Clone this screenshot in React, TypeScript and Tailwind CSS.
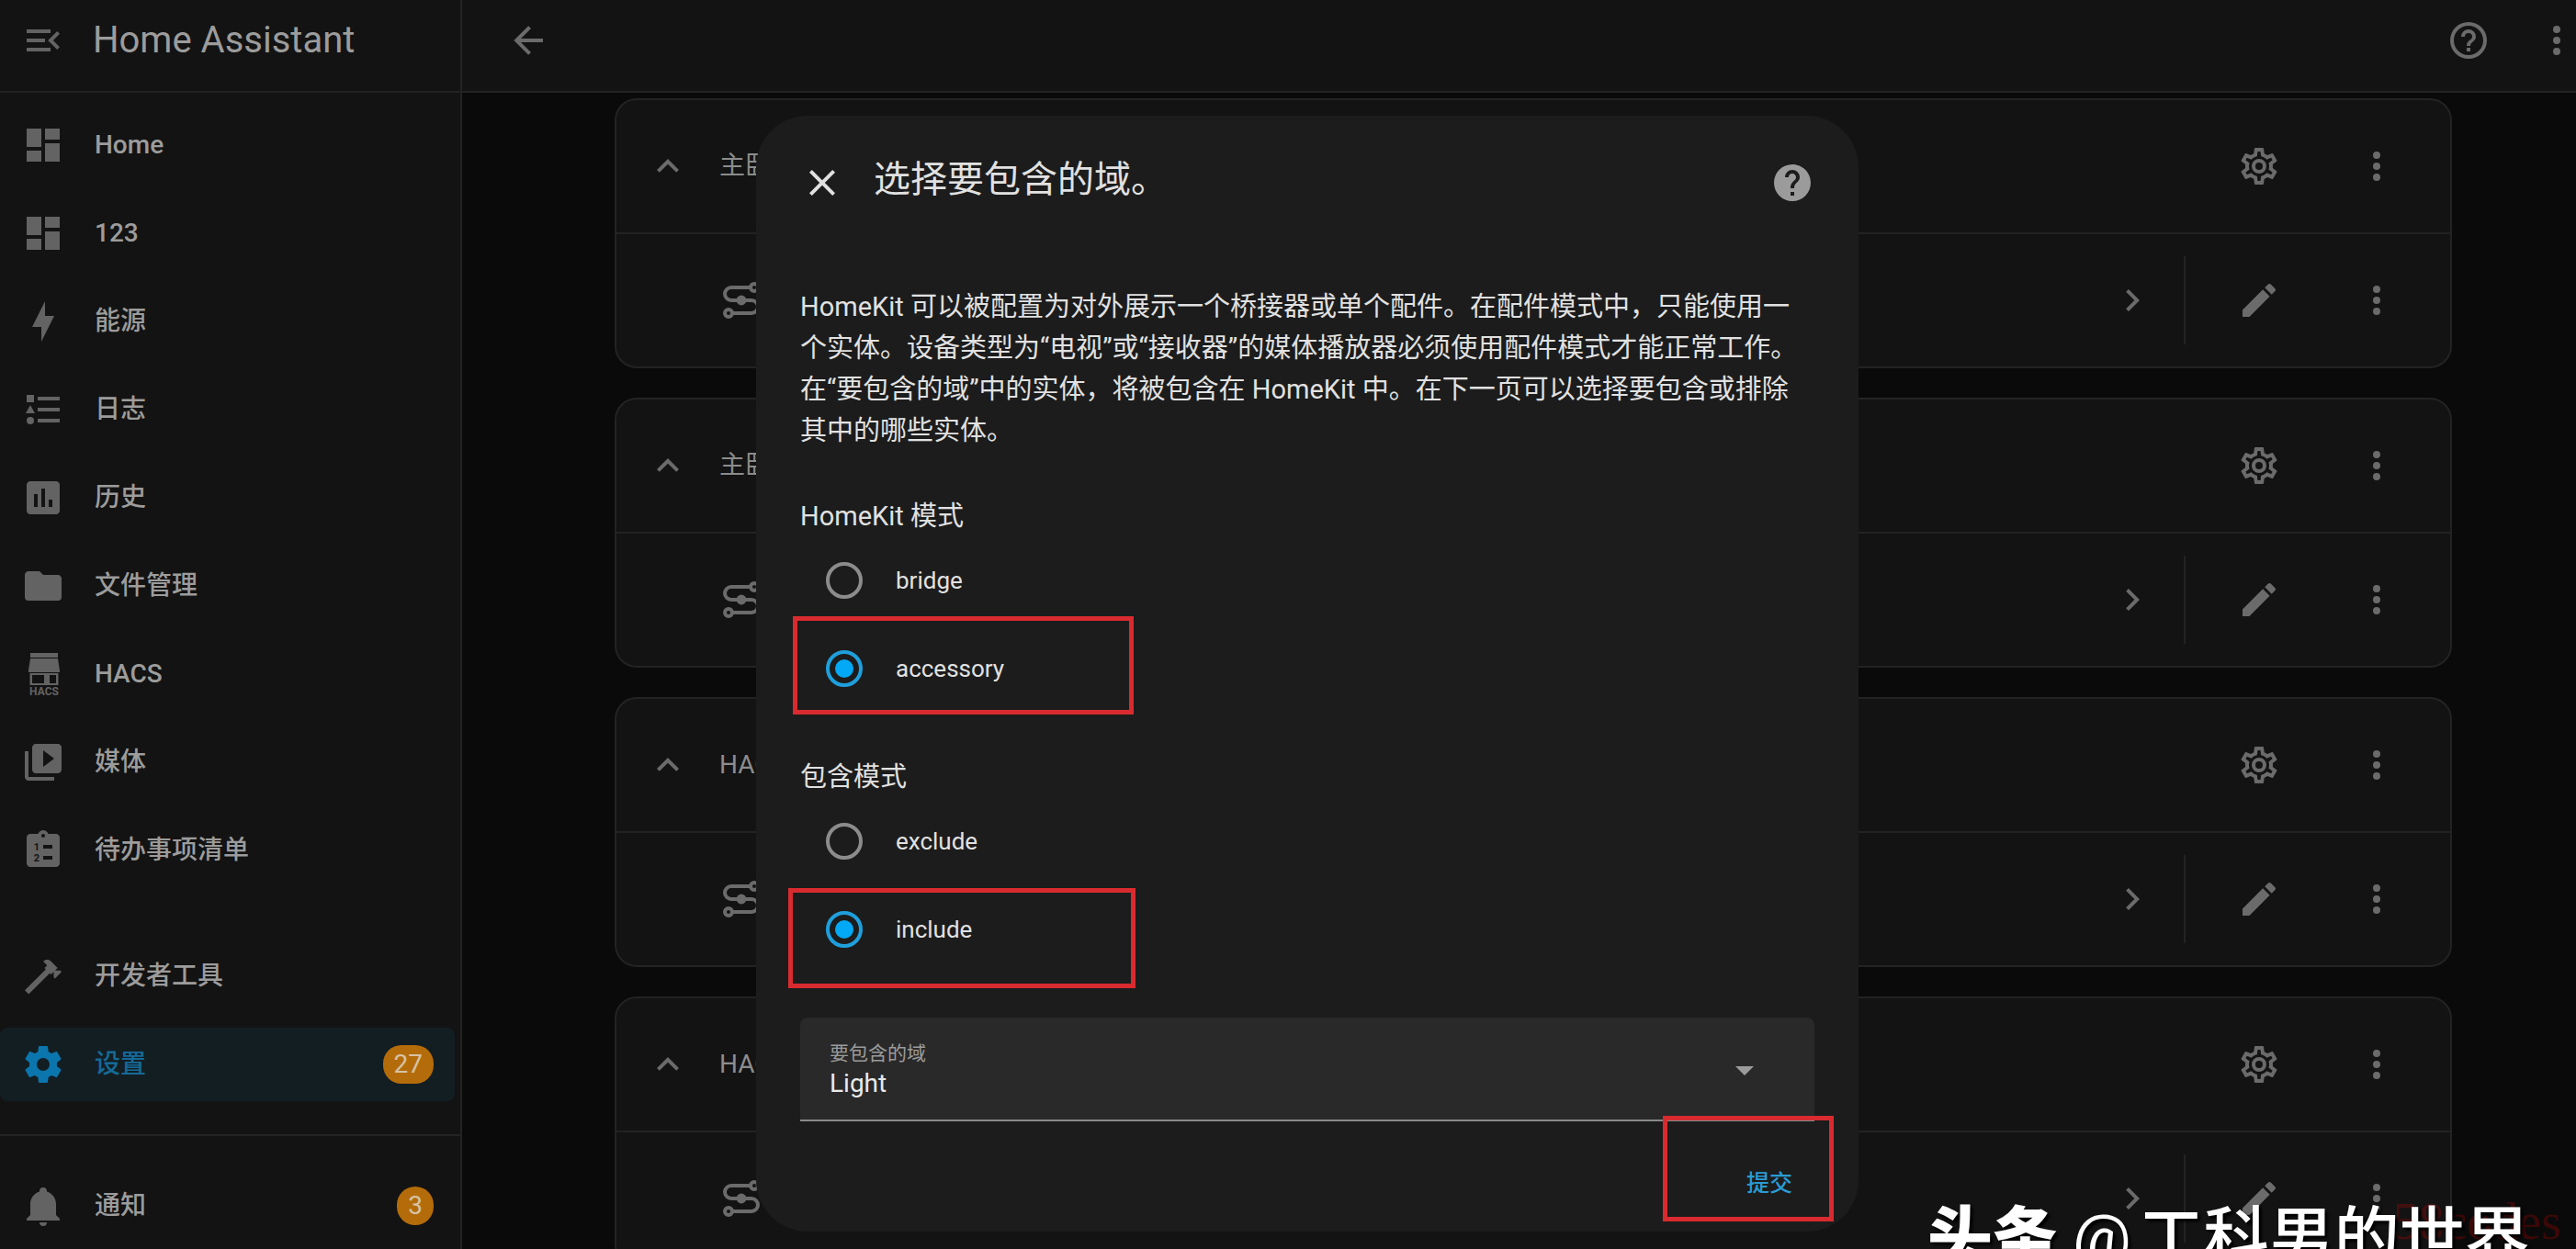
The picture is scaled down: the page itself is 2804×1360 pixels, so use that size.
import { useState } from "react"
import type { ReactNode } from "react"

const ICONS = {
  menuOpen:
    "M3 18h13v-2H3v2zm0-5h10v-2H3v2zm0-7v2h13V6H3zm18 9.59L17.42 12 21 8.41 19.59 7l-5 5 5 5L21 15.59z",
  arrowLeft: "M20,11V13H8L13.5,18.5L12.08,19.92L4.16,12L12.08,4.08L13.5,5.5L8,11H20Z",
  dashboard: "M3 13h8V3H3v10zm0 8h8v-6H3v6zm10 0h8V11h-8v10zm0-18v6h8V3h-8z",
  bolt: "M11 15H6L13 1V9H18L11 23V15Z",
  listType:
    "M5,9.5L7.5,14H2.5L5,9.5M3,4H7V8H3V4M5,20A2,2 0 0,0 7,18A2,2 0 0,0 5,16A2,2 0 0,0 3,18A2,2 0 0,0 5,20M9,5V7H21V5H9M9,19H21V17H9V19M9,13H21V11H9V13Z",
  chartBox:
    "M9 17H7V10H9V17M13 17H11V7H13V17M17 17H15V13H17V17M19 3H5C3.9 3 3 3.9 3 5V19C3 20.1 3.9 21 5 21H19C20.1 21 21 20.1 21 19V5C21 3.9 20.1 3 19 3Z",
  folder:
    "M10,4H4C2.89,4 2,4.89 2,6V18A2,2 0 0,0 4,20H20A2,2 0 0,0 22,18V8C22,6.89 21.1,6 20,6H12L10,4Z",
  media:
    "M4 6H2v14c0 1.1.9 2 2 2h14v-2H4V6zm16-4H8c-1.1 0-2 .9-2 2v12c0 1.1.9 2 2 2h12c1.1 0 2-.9 2-2V4c0-1.1-.9-2-2-2zm-8 12.5v-9l6 4.5-6 4.5z",
  hammer:
    "M2,19.63L13.43,8.2L12.72,7.5L14.14,6.07L12,3.89C13.2,2.7 15.09,2.7 16.27,3.89L19.87,7.5L18.45,8.91H21.29L22,9.62L18.45,13.21L17.74,12.5V9.62L16.27,11.04L15.56,10.33L4.13,21.76L2,19.63Z",
  cog: "M12,15.5A3.5,3.5 0 0,1 8.5,12A3.5,3.5 0 0,1 12,8.5A3.5,3.5 0 0,1 15.5,12A3.5,3.5 0 0,1 12,15.5M19.43,12.97C19.47,12.65 19.5,12.33 19.5,12C19.5,11.67 19.47,11.34 19.43,11L21.54,9.37C21.73,9.22 21.78,8.95 21.66,8.73L19.66,5.27C19.54,5.05 19.27,4.96 19.05,5.05L16.56,6.05C16.04,5.66 15.5,5.32 14.87,5.07L14.5,2.42C14.46,2.18 14.25,2 14,2H10C9.75,2 9.54,2.18 9.5,2.42L9.13,5.07C8.5,5.32 7.96,5.66 7.44,6.05L4.95,5.05C4.73,4.96 4.46,5.05 4.34,5.27L2.34,8.73C2.21,8.95 2.27,9.22 2.46,9.37L4.57,11C4.53,11.34 4.5,11.67 4.5,12C4.5,12.33 4.53,12.65 4.57,12.97L2.46,14.63C2.27,14.78 2.21,15.05 2.34,15.27L4.34,18.73C4.46,18.95 4.73,19.03 4.95,18.95L7.44,17.94C7.96,18.34 8.5,18.68 9.13,18.93L9.5,21.58C9.54,21.82 9.75,22 10,22H14C14.25,22 14.46,21.82 14.5,21.58L14.87,18.93C15.5,18.67 16.04,18.34 16.56,17.94L19.05,18.95C19.27,19.03 19.54,18.95 19.66,18.73L21.66,15.27C21.78,15.05 21.73,14.78 21.54,14.63L19.43,12.97Z",
  cogOutline:
    "M12,8A4,4 0 0,1 16,12A4,4 0 0,1 12,16A4,4 0 0,1 8,12A4,4 0 0,1 12,8M12,10A2,2 0 0,0 10,12A2,2 0 0,0 12,14A2,2 0 0,0 14,12A2,2 0 0,0 12,10M10,22C9.75,22 9.54,21.82 9.5,21.58L9.13,18.93C8.5,18.68 7.96,18.34 7.44,17.94L4.95,18.95C4.73,19.03 4.46,18.95 4.34,18.73L2.34,15.27C2.21,15.05 2.27,14.78 2.46,14.63L4.57,12.97L4.5,12L4.57,11L2.46,9.37C2.27,9.22 2.21,8.95 2.34,8.73L4.34,5.27C4.46,5.05 4.73,4.96 4.95,5.05L7.44,6.05C7.96,5.66 8.5,5.32 9.13,5.07L9.5,2.42C9.54,2.18 9.75,2 10,2H14C14.25,2 14.46,2.18 14.5,2.42L14.87,5.07C15.5,5.32 16.04,5.66 16.56,6.05L19.05,5.05C19.27,4.96 19.54,5.05 19.66,5.27L21.66,8.73C21.79,8.95 21.73,9.22 21.54,9.37L19.43,11L19.5,12L19.43,13L21.54,14.63C21.73,14.78 21.79,15.05 21.66,15.27L19.66,18.73C19.54,18.95 19.27,19.04 19.05,18.95L16.56,17.95C16.04,18.34 15.5,18.68 14.87,18.93L14.5,21.58C14.46,21.82 14.25,22 14,22H10M11.25,4L10.88,6.61C9.68,6.86 8.62,7.5 7.85,8.39L5.44,7.35L4.69,8.65L6.8,10.2C6.4,11.37 6.4,12.64 6.8,13.8L4.68,15.36L5.43,16.66L7.86,15.62C8.63,16.5 9.68,17.14 10.87,17.38L11.24,20H12.76L13.13,17.39C14.32,17.14 15.37,16.5 16.14,15.62L18.57,16.66L19.32,15.36L17.2,13.81C17.6,12.64 17.6,11.37 17.2,10.2L19.31,8.65L18.56,7.35L16.15,8.39C15.38,7.5 14.32,6.86 13.12,6.62L12.75,4H11.25Z",
  bell: "M21,19V20H3V19L5,17V11C5,7.9 7.03,5.17 10,4.29C10,4.19 10,4.1 10,4A2,2 0 0,1 12,2A2,2 0 0,1 14,4C14,4.1 14,4.19 14,4.29C16.97,5.17 19,7.9 19,11V17L21,19M14,21A2,2 0 0,1 12,23A2,2 0 0,1 10,21",
  helpOutline:
    "M11,18H13V16H11V18M12,2A10,10 0 0,0 2,12A10,10 0 0,0 12,22A10,10 0 0,0 22,12A10,10 0 0,0 12,2M12,20C7.59,20 4,16.41 4,12C4,7.59 7.59,4 12,4C16.41,4 20,7.59 20,12C20,16.41 16.41,20 12,20M12,6A4,4 0 0,0 8,10H10A2,2 0 0,1 12,8A2,2 0 0,1 14,10C14,12 11,11.75 11,15H13C13,12.75 16,12.5 16,10A4,4 0 0,0 12,6Z",
  help: "M15.07,11.25L14.17,12.17C13.45,12.89 13,13.5 13,15H11V14.5C11,13.39 11.45,12.39 12.17,11.67L13.41,10.41C13.78,10.05 14,9.55 14,9C14,7.89 13.1,7 12,7A2,2 0 0,0 10,9H8A4,4 0 0,1 12,5A4,4 0 0,1 16,9C16,9.88 15.64,10.67 15.07,11.25M13,19H11V17H13M12,2A10,10 0 0,0 2,12A10,10 0 0,0 12,22A10,10 0 0,0 22,12C22,6.47 17.5,2 12,2Z",
  dots: "M12,16A2,2 0 0,1 14,18A2,2 0 0,1 12,20A2,2 0 0,1 10,18A2,2 0 0,1 12,16M12,10A2,2 0 0,1 14,12A2,2 0 0,1 12,14A2,2 0 0,1 10,12A2,2 0 0,1 12,10M12,4A2,2 0 0,1 14,6A2,2 0 0,1 12,8A2,2 0 0,1 10,6A2,2 0 0,1 12,4Z",
  pencil:
    "M20.71,7.04C21.1,6.65 21.1,6 20.71,5.63L18.37,3.29C18,2.9 17.35,2.9 16.96,3.29L15.12,5.12L18.87,8.87M3,17.25V21H6.75L17.81,9.93L14.06,6.18L3,17.25Z",
  chevronUp: "M7.41,15.41L12,10.83L16.59,15.41L18,14L12,8L6,14L7.41,15.41Z",
  chevronRight: "M8.59,16.58L13.17,12L8.59,7.41L10,6L16,12L10,18L8.59,16.58Z",
  close:
    "M19,6.41L17.59,5L12,10.59L6.41,5L5,6.41L10.59,12L5,17.59L6.41,19L12,13.41L17.59,19L19,17.59L13.41,12L19,6.41Z",
  menuDown: "M7,10L12,15L17,10H7Z",
}

type IconName = keyof typeof ICONS

function Icon({ name }: { name: IconName }) {
  return (
    <svg viewBox="0 0 24 24" className="size-12 shrink-0" fill="currentColor" aria-hidden="true">
      <path fillRule="evenodd" d={ICONS[name]} />
    </svg>
  )
}

function HacsIcon() {
  return (
    <svg viewBox="0 0 48 48" className="size-12 shrink-0 overflow-visible" fill="currentColor" aria-hidden="true">
      <path d="M10 1h30v5H10zM10 7h30l2 13v2H8v-2z" />
      <path fillRule="evenodd" d="M9.500 23h31v13h-31zM12 25v9h13v-9zM31 25v9h7v-9z" />
      <text x="25" y="47" fontSize="12" fontWeight="700" textAnchor="middle">
        HACS
      </text>
    </svg>
  )
}

function TodoIcon() {
  return (
    <svg viewBox="0 0 24 24" className="size-12 shrink-0" fill="currentColor" aria-hidden="true">
      <path
        fillRule="evenodd"
        d="M19 3h-4.180C14.400 1.840 13.300 1 12 1c-1.300 0-2.400.840-2.820 2H5c-1.100 0-2 .9-2 2v14c0 1.100.9 2 2 2h14c1.100 0 2-.9 2-2V5c0-1.100-.9-2-2-2zm-7 0c.550 0 1 .450 1 1s-.450 1-1 1-1-.450-1-1 .450-1 1-1zM12 9h5v2h-5zM12 15h5v2h-5z"
      />
      <text x="8.500" y="12" fontSize="5.500" fontWeight="700" textAnchor="middle" className="fill-[#131313]">
        1
      </text>
      <text x="8.500" y="18" fontSize="5.500" fontWeight="700" textAnchor="middle" className="fill-[#131313]">
        2
      </text>
    </svg>
  )
}

function TransitIcon() {
  return (
    <svg viewBox="0 0 24 24" className="size-12 shrink-0" fill="none" stroke="currentColor" strokeWidth="2" aria-hidden="true">
      <path d="M16.500 5H6.500a3.500 3.500 0 0 0 0 7h11a3.500 3.500 0 0 1 0 7H7.500" />
      <circle cx="19" cy="5" r="2" />
      <circle cx="5" cy="19" r="2" />
      <circle cx="12" cy="12" r="2.700" fill="currentColor" stroke="none" />
    </svg>
  )
}

interface NavItem {
  label: string
  icon: ReactNode
  badge?: number
  active?: boolean
}

const MAIN_ITEMS: NavItem[] = [
  { label: "Home", icon: <Icon name="dashboard" /> },
  { label: "123", icon: <Icon name="dashboard" /> },
  { label: "能源", icon: <Icon name="bolt" /> },
  { label: "日志", icon: <Icon name="listType" /> },
  { label: "历史", icon: <Icon name="chartBox" /> },
  { label: "文件管理", icon: <Icon name="folder" /> },
  { label: "HACS", icon: <HacsIcon /> },
  { label: "媒体", icon: <Icon name="media" /> },
  { label: "待办事项清单", icon: <TodoIcon /> },
]

const TOOL_ITEMS: NavItem[] = [
  { label: "开发者工具", icon: <Icon name="hammer" /> },
  { label: "设置", icon: <Icon name="cog" />, badge: 27, active: true },
]

const ENTRIES = ["主卧", "主卧", "HACS", "HACS"]

function NavLink({ item }: { item: NavItem }) {
  return (
    <a
      href="#"
      aria-current={item.active ? "page" : undefined}
      className={`mr-1.5 flex h-20 items-center rounded-lg px-[23px] text-[28px] font-medium ${
        item.active ? "bg-[#131e23] text-[#156a98]" : "text-[#9c9c9c]"
      }`}
    >
      <span className={item.active ? "text-[#0b76ad]" : "text-[#636363]"}>{item.icon}</span>
      <span className="ml-8 flex-1">{item.label}</span>
      {item.badge ? (
        <span className="flex h-[42px] min-w-10 items-center justify-center rounded-[20px] bg-[#b46c0a] px-3 font-normal text-[#d6c3a5]">
          {item.badge}
        </span>
      ) : null}
    </a>
  )
}

function Sidebar() {
  return (
    <aside className="flex w-[503px] shrink-0 flex-col border-r-2 border-[#232323] bg-[#131313]">
      <header className="flex h-[101px] shrink-0 items-center border-b-2 border-[#232323] pb-[11px] pl-[23px]">
        <button type="button" aria-label="Collapse sidebar" className="text-[#636363]">
          <Icon name="menuOpen" />
        </button>
        <h1 className="ml-[30px] text-[40px] leading-[48px] text-[#9c9c9c]">Home Assistant</h1>
      </header>
      <nav className="flex flex-col">
        <div className="flex flex-col gap-4 pt-[17px]">
          {MAIN_ITEMS.map((item) => (
            <NavLink key={item.label} item={item} />
          ))}
        </div>
        <div className="mt-[57px] flex flex-col gap-4">
          {TOOL_ITEMS.map((item) => (
            <NavLink key={item.label} item={item} />
          ))}
        </div>
        <div className="mt-9 border-t-2 border-[#232323] pt-9">
          <NavLink item={{ label: "通知", icon: <Icon name="bell" />, badge: 3 }} />
        </div>
      </nav>
    </aside>
  )
}

function EntryCard({ title }: { title: string }) {
  return (
    <section className="shrink-0 rounded-3xl border-2 border-[#232323] bg-[#131313] text-[#6b6b6b]">
      <div className="flex h-36 items-center pr-14 pl-8">
        <button type="button" aria-label="Collapse">
          <Icon name="chevronUp" />
        </button>
        <h2 className="ml-8 flex-1 text-[28px] text-[#8c8c8c]">{title}</h2>
        <button type="button" aria-label="Configure" className="mr-20">
          <Icon name="cogOutline" />
        </button>
        <button type="button" aria-label="More">
          <Icon name="dots" />
        </button>
      </div>
      <div className="flex h-[146px] items-center border-t-2 border-[#232323] pr-14 pl-28">
        <span className="flex-1">
          <TransitIcon />
        </span>
        <button type="button" aria-label="Open">
          <Icon name="chevronRight" />
        </button>
        <div className="ml-8 h-24 border-l-2 border-[#232323]" />
        <button type="button" aria-label="Rename" className="mr-20 ml-14">
          <Icon name="pencil" />
        </button>
        <button type="button" aria-label="More">
          <Icon name="dots" />
        </button>
      </div>
    </section>
  )
}

interface RadioGroupProps {
  legend: string
  name: string
  options: string[]
  value: string
  onChange: (value: string) => void
}

function RadioGroup({ legend, name, options, value, onChange }: RadioGroupProps) {
  return (
    <fieldset className="mt-12">
      <legend className="h-11 text-[29px] leading-[44px]">{legend}</legend>
      {options.map((option) => (
        <label key={option} className="flex h-24 items-center pl-7 text-[26px]">
          <input
            type="radio"
            name={name}
            value={option}
            checked={value === option}
            onChange={() => onChange(option)}
            className="flex size-10 appearance-none items-center justify-center rounded-full border-4 border-[#8c8c8c] before:size-5 before:rounded-full checked:border-[#1f9fdc] checked:before:bg-[#03a9f4]"
          />
          <span className="ml-9">{option}</span>
        </label>
      ))}
    </fieldset>
  )
}

function DomainDialog() {
  const [mode, setMode] = useState("accessory")
  const [filter, setFilter] = useState("include")

  return (
    <div className="absolute inset-0 flex items-start justify-center pt-[126px] pl-[42px]">
      <div
        role="dialog"
        aria-labelledby="dialog-title"
        className="relative w-full max-w-[1200px] rounded-[56px] bg-[#1c1c1c] px-12 pb-8 text-[#e1e1e1]"
      >
        <header className="flex h-[186px] items-start pt-[49px]">
          <button type="button" aria-label="Close">
            <Icon name="close" />
          </button>
          <h2 id="dialog-title" className="ml-8 flex-1 text-[40px] leading-[42px]">
            选择要包含的域。
          </h2>
          <a href="#" aria-label="Help" className="text-[#9b9b9b]">
            <Icon name="help" />
          </a>
        </header>

        <p className="text-[29px] leading-[45px]">
          HomeKit 可以被配置为对外展示一个桥接器或单个配件。在配件模式中，只能使用一个实体。设备类型为“电视”或“接收器”的媒体播放器必须使用配件模式才能正常工作。在“要包含的域”中的实体，将被包含在 HomeKit 中。在下一页可以选择要包含或排除其中的哪些实体。
        </p>

        <RadioGroup legend="HomeKit 模式" name="mode" options={["bridge", "accessory"]} value={mode} onChange={setMode} />
        <RadioGroup legend="包含模式" name="filter" options={["exclude", "include"]} value={filter} onChange={setFilter} />

        <div className="relative mt-12 flex h-[113px] flex-col rounded-t-lg border-b-2 border-[#8a8a8a] bg-[#292929] pt-[25px]">
          <label htmlFor="domains" className="pl-8 text-[21px] leading-[28px] text-[#9b9b9b]">
            要包含的域
          </label>
          <select id="domains" className="h-[38px] appearance-none pl-8 text-[28px] leading-[38px] text-[#e9e9e9]">
            <option>Light</option>
          </select>
          <span className="pointer-events-none absolute top-[33px] right-[52px] text-[#9b9b9b]">
            <Icon name="menuDown" />
          </span>
        </div>

        <footer className="mt-12 flex justify-end pr-6">
          <button type="button" className="text-[25px] leading-[40px] font-medium text-[#2a9bd4]">
            提交
          </button>
        </footer>

        {/* callouts */}
        <div className="pointer-events-none absolute top-[545px] left-[40px] h-[107px] w-[371px] border-5 border-[#d92b2f]" />
        <div className="pointer-events-none absolute top-[841px] left-[35px] h-[109px] w-[378px] border-5 border-[#d92b2f]" />
        <div className="pointer-events-none absolute top-[1089px] right-[27px] h-[115px] w-[186px] border-5 border-[#d92b2f]" />
      </div>
    </div>
  )
}

export default function App() {
  return (
    <div className="relative flex h-screen overflow-hidden bg-[#0a0a0a] font-[Roboto,'Noto_Sans_CJK_SC',sans-serif]">
      <Sidebar />
      <main className="flex min-w-0 flex-1 flex-col">
        <header className="flex h-[101px] shrink-0 items-center border-b-2 border-[#232323] bg-[#131313] pb-[11px] pl-12 text-[#6b6b6b]">
          <button type="button" aria-label="Back">
            <Icon name="arrowLeft" />
          </button>
          <a href="#" aria-label="Help" className="mr-[51px] ml-auto">
            <Icon name="helpOutline" />
          </a>
          <button type="button" aria-label="More" className="flex w-[42px] justify-center">
            <Icon name="dots" />
          </button>
        </header>
        <div className="flex min-h-0 flex-1 justify-center overflow-hidden pt-1.5 pl-[31px]">
          <div className="flex w-full max-w-[2000px] flex-col gap-8">
            {ENTRIES.map((title, i) => (
              <EntryCard key={i} title={title} />
            ))}
          </div>
        </div>
      </main>

      <DomainDialog />

      <div className="pointer-events-none absolute right-4 bottom-0 font-['Liberation_Serif',serif] text-[56px] leading-[60px] text-[#ff0000]/20">
        58codes
      </div>
      <div className="pointer-events-none absolute top-[1310px] left-[2098px] flex items-start whitespace-nowrap text-[71px] leading-[76px] text-white [text-shadow:3px_3px_3px_#000]">
        <span className="font-black">头条</span>
        <span className="ml-4">@</span>
        <span className="ml-2 font-medium">工科男的世界</span>
      </div>
    </div>
  )
}
